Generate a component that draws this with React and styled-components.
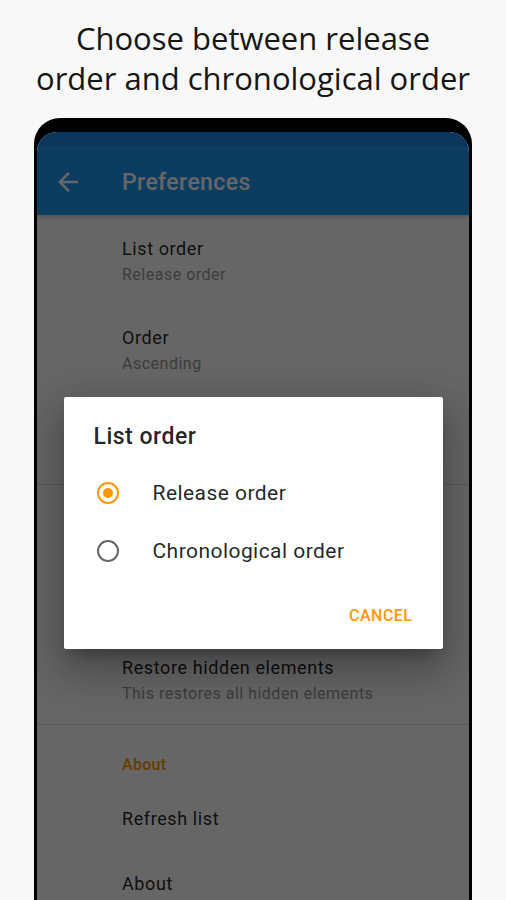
import React from "react";
import styled, { createGlobalStyle } from "styled-components";

const GlobalStyle = createGlobalStyle`
  html, body { margin: 0; padding: 0; background: #f8f8f8; }
  body { overflow: hidden; }
  * { box-sizing: border-box; }
`;

const Page = styled.div`
  width: 506px;
  height: 900px;
  overflow: hidden;
  background: #f8f8f8;
  display: flex;
  flex-direction: column;
  align-items: center;
`;

const Headline = styled.h1`
  margin: 18px 0 0;
  font-family: "Open Sans", "Noto Sans", sans-serif;
  font-weight: 400;
  font-size: 31px;
  line-height: 40px;
  text-align: center;
  color: #161616;
  white-space: nowrap;
`;

const Phone = styled.div`
  flex: none;
  align-self: flex-start;
  margin: 20px 0 0 34px;
  width: 438px;
  height: 796px;
  padding: 14px 3px 0;
  background: #000;
  border-radius: 26px 26px 0 0;
`;

const Screen = styled.div`
  position: relative;
  height: 782px;
  background: #fff;
  border-radius: 20px 20px 0 0;
  overflow: hidden;
  font-family: Roboto, "Noto Sans", sans-serif;
`;

const StatusBar = styled.div`
  height: 14px;
  background: #1c86e2;
`;

const Toolbar = styled.header`
  height: 69px;
  padding: 3px 0 0 16px;
  background: #2196f3;
  display: flex;
  align-items: center;
  gap: 39px;
  box-shadow: 0 2px 4px rgba(0, 0, 0, 0.2);
`;

const ToolbarTitle = styled.div`
  color: #fff;
  font-size: 23px;
  font-weight: 500;
  letter-spacing: 0.4px;
`;

const List = styled.div`
  display: flex;
  flex-direction: column;
  padding-top: 1px;
`;

const Item = styled.div`
  height: ${(p) => p.$h || 89}px;
  padding-left: 85px;
  display: flex;
  flex-direction: column;
  justify-content: center;
`;

const ItemTitle = styled.div`
  font-size: 18px;
  line-height: 24px;
  letter-spacing: 0.6px;
  color: rgba(0, 0, 0, 0.87);
`;

const ItemSummary = styled.div`
  margin-top: 4px;
  font-size: 16px;
  line-height: 20px;
  letter-spacing: 0.5px;
  color: #9a9a9a;
`;

const Divider = styled.div`
  height: 1px;
  background: #dcdcdc;
`;

const Category = styled.div`
  height: 61px;
  padding: 30px 0 0 85px;
  font-size: 16px;
  font-weight: 500;
  line-height: 20px;
  letter-spacing: 0.3px;
  color: #ff9800;
`;

const Scrim = styled.div`
  position: absolute;
  inset: 0;
  background: rgba(0, 0, 0, 0.6);
  display: flex;
  align-items: center;
  justify-content: center;
`;

const Dialog = styled.div`
  width: 379px;
  height: 252px;
  background: #fff;
  border-radius: 2px;
  box-shadow: 0 11px 15px -7px rgba(0, 0, 0, 0.25),
    0 24px 38px 3px rgba(0, 0, 0, 0.16), 0 9px 46px 8px rgba(0, 0, 0, 0.14);
  display: flex;
  flex-direction: column;
  padding: 26px 0 0;
`;

const DialogTitle = styled.div`
  padding-left: 30px;
  font-size: 23px;
  font-weight: 500;
  line-height: 28px;
  letter-spacing: 0.5px;
  color: rgba(0, 0, 0, 0.87);
`;

const Options = styled.div`
  margin-top: 13px;
  display: flex;
  flex-direction: column;
`;

const Option = styled.label`
  height: 58px;
  display: flex;
  align-items: center;
  padding-left: 33px;
  gap: 34px;
  font-size: 21px;
  letter-spacing: 0.45px;
  color: rgba(0, 0, 0, 0.87);
`;

const Radio = styled.span`
  flex: none;
  width: 22px;
  height: 22px;
  border-radius: 50%;
  border: 2px solid ${(p) => (p.$checked ? "#ff9800" : "#666")};
  display: flex;
  align-items: center;
  justify-content: center;
  &::after {
    content: "";
    width: 10px;
    height: 10px;
    border-radius: 50%;
    background: ${(p) => (p.$checked ? "#ff9800" : "transparent")};
  }
`;

const Actions = styled.div`
  margin-top: 26px;
  display: flex;
  justify-content: flex-end;
  padding-right: 30px;
`;

const TextButton = styled.button`
  border: 0;
  background: none;
  padding: 0;
  font-family: Roboto, sans-serif;
  font-size: 16px;
  font-weight: 500;
  letter-spacing: 0.5px;
  color: #ff9800;
`;

const BackIcon = () => (
  <svg width="30" height="30" viewBox="0 0 24 24" fill="#fff">
    <path d="M20 11H7.83l5.59-5.59L12 4l-8 8 8 8 1.41-1.41L7.83 13H20v-2z" />
  </svg>
);

export default function App() {
  return (
    <>
      <GlobalStyle />
      <Page>
        <Headline>
          Choose between release
          <br />
          order and chronological order
        </Headline>
        <Phone>
          <Screen>
            <StatusBar />
            <Toolbar>
              <BackIcon />
              <ToolbarTitle>Preferences</ToolbarTitle>
            </Toolbar>
            <List>
              <Item>
                <ItemTitle>List order</ItemTitle>
                <ItemSummary>Release order</ItemSummary>
              </Item>
              <Item $h={90}>
                <ItemTitle>Order</ItemTitle>
                <ItemSummary>Ascending</ItemSummary>
              </Item>
              <Item />
              <Divider />
              <Category />
              <Item />
              <Item>
                <ItemTitle>Restore hidden elements</ItemTitle>
                <ItemSummary>This restores all hidden elements</ItemSummary>
              </Item>
              <Divider />
              <Category>About</Category>
              <Item $h={65}>
                <ItemTitle>Refresh list</ItemTitle>
              </Item>
              <Item $h={65}>
                <ItemTitle>About</ItemTitle>
              </Item>
            </List>
            <Scrim>
              <Dialog>
                <DialogTitle>List order</DialogTitle>
                <Options>
                  <Option>
                    <Radio $checked />
                    Release order
                  </Option>
                  <Option>
                    <Radio />
                    Chronological order
                  </Option>
                </Options>
                <Actions>
                  <TextButton>CANCEL</TextButton>
                </Actions>
              </Dialog>
            </Scrim>
          </Screen>
        </Phone>
      </Page>
    </>
  );
}
